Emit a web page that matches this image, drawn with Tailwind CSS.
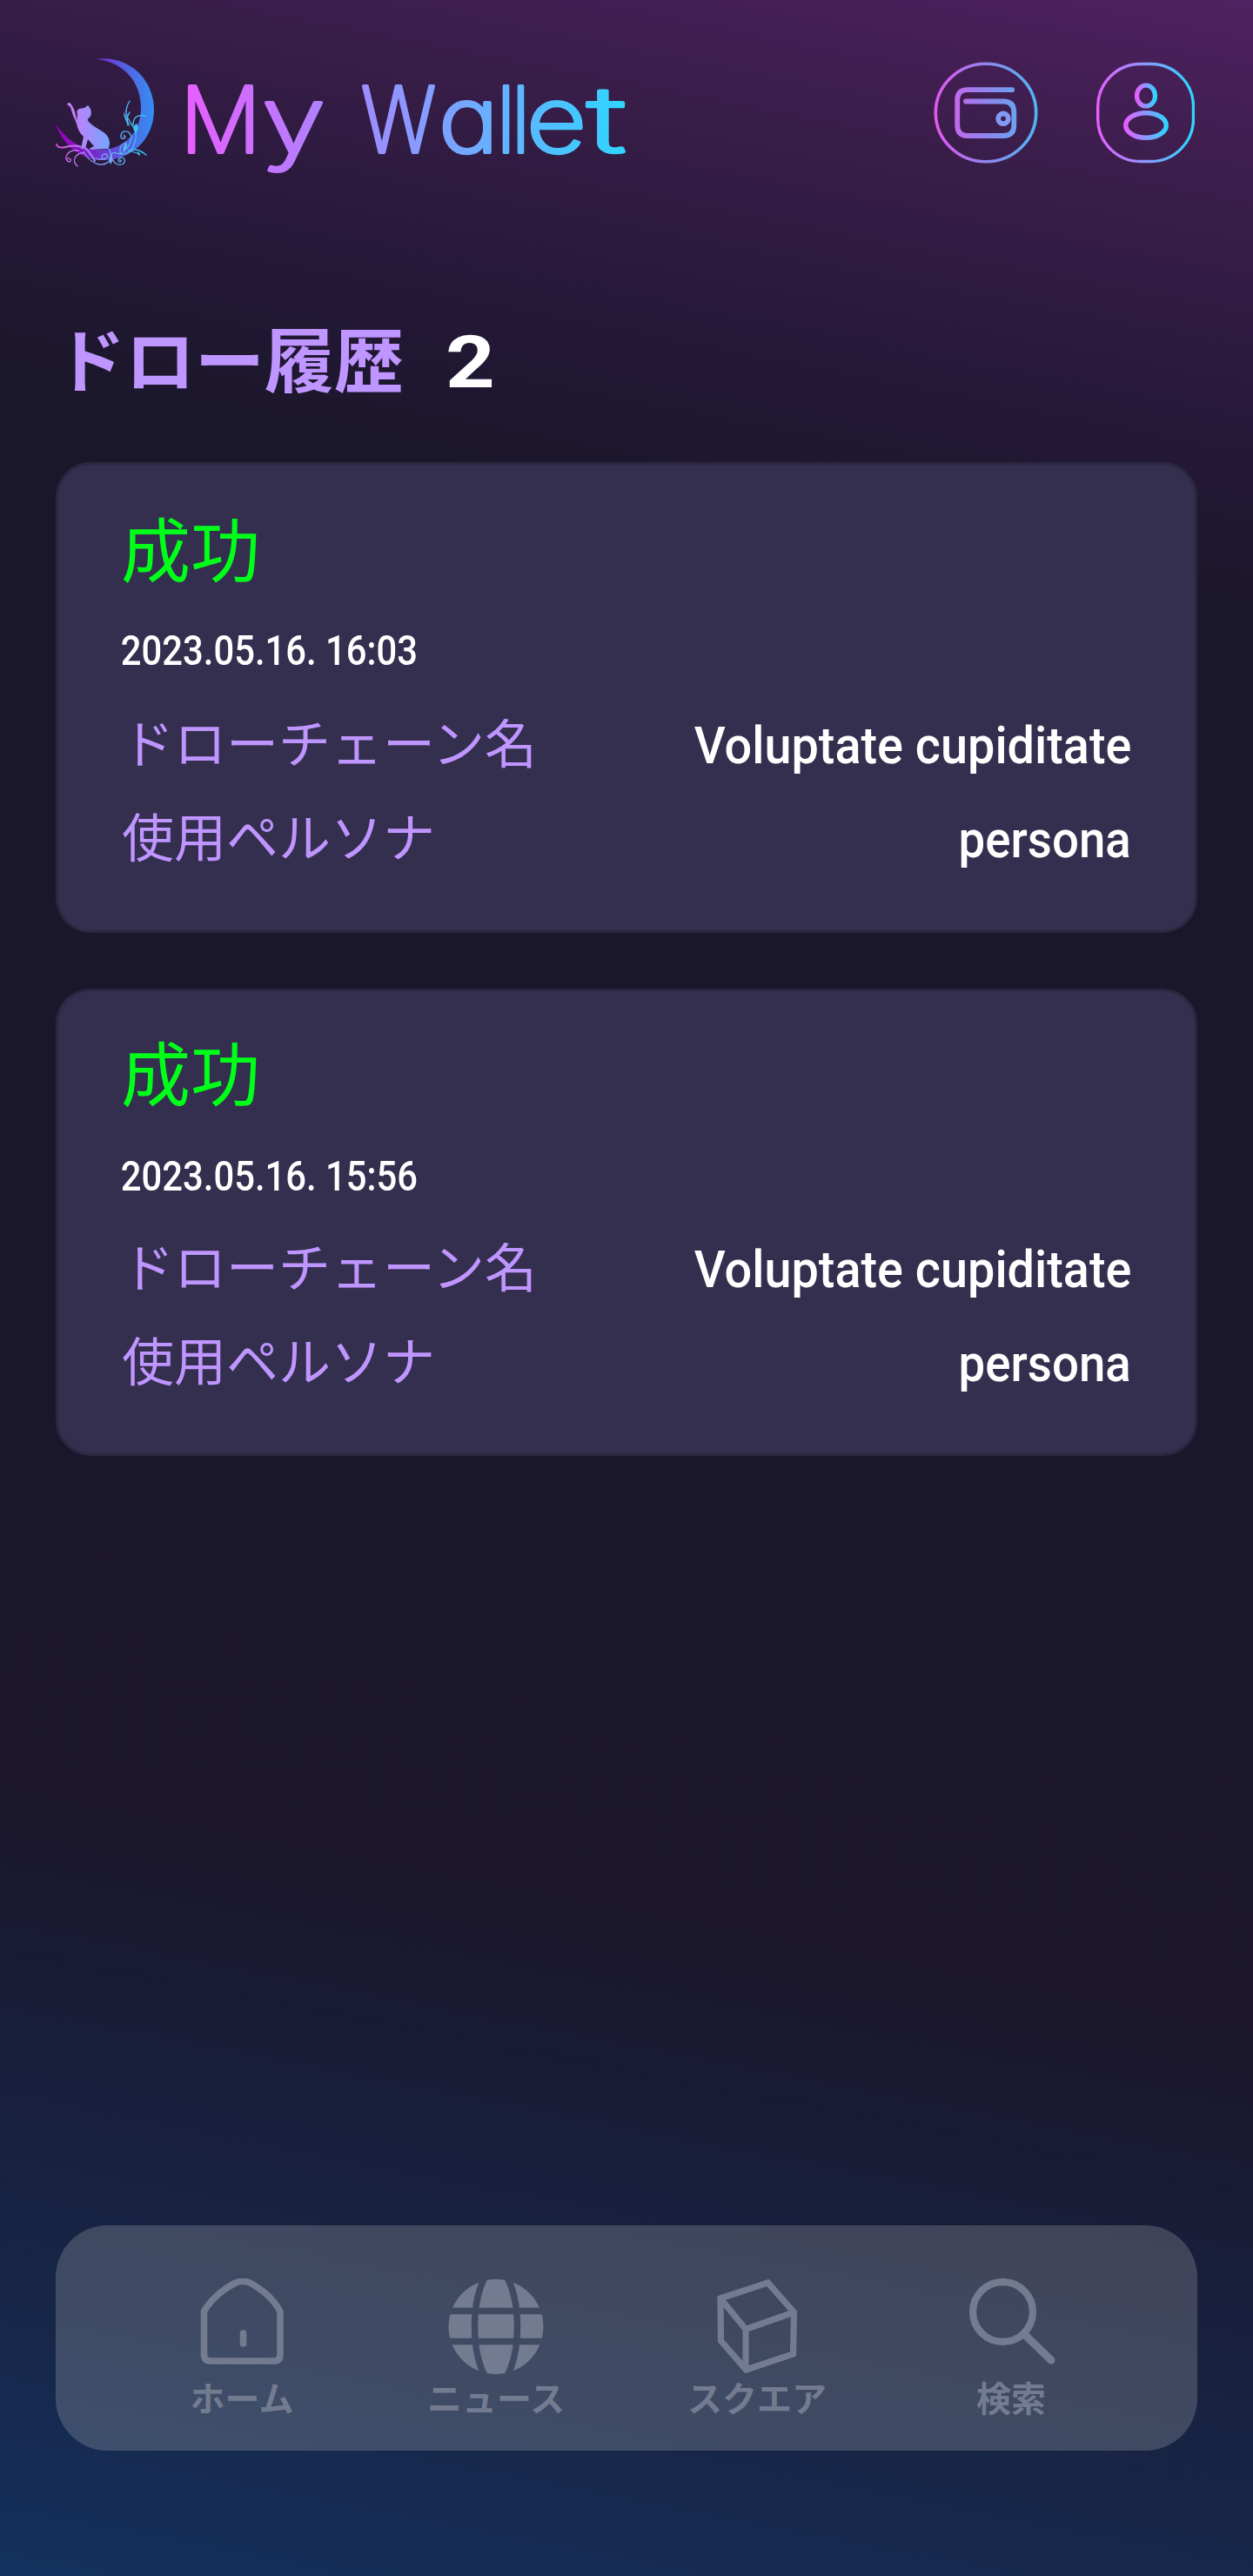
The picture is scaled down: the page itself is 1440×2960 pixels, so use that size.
<!DOCTYPE html>
<html lang="ja">
<head>
<meta charset="utf-8">
<title>My Wallet</title>
<script src="https://cdn.jsdelivr.net/npm/@tailwindcss/browser@4"></script>
</head>
<body class="w-[1440px] h-[2960px] overflow-hidden bg-[#1b162b] bg-[linear-gradient(191deg,#4f2160_0%,#381d48_8%,#241838_16%,#1b172b_22%,#1b162b_72%,#181f3c_82%,#172749_91%,#14315f_100%)] font-[Roboto,'Noto_Sans_CJK_JP',sans-serif] text-white flex flex-col">

<header class="h-[260px] pl-16 pr-[67px] flex justify-between shrink-0">
  <svg class="w-[680px] h-[210px]" viewBox="64 0 680 210" role="img" aria-label="My Wallet">
    <defs>
      <linearGradient id="brand" gradientUnits="userSpaceOnUse" x1="215" y1="0" x2="718" y2="0"><stop stop-color="#e65fff"/><stop offset=".5" stop-color="#8d97ff"/><stop offset="1" stop-color="#2fd5ff"/></linearGradient>
      <linearGradient id="moon" gradientUnits="userSpaceOnUse" x1="64" y1="0" x2="177" y2="0"><stop stop-color="#9d00b8"/><stop offset=".35" stop-color="#7a22c8"/><stop offset=".65" stop-color="#5b55dc"/><stop offset="1" stop-color="#3490f5"/></linearGradient>
      <linearGradient id="cat" gradientUnits="userSpaceOnUse" x1="76" y1="0" x2="126" y2="0"><stop stop-color="#d277f8"/><stop offset="1" stop-color="#76a4ff"/></linearGradient>
      <linearGradient id="vine" gradientUnits="userSpaceOnUse" x1="64" y1="0" x2="168" y2="0"><stop stop-color="#e64fe0"/><stop offset=".5" stop-color="#83a0f5"/><stop offset="1" stop-color="#2cc9f2"/></linearGradient>
    </defs>
    <path fill="url(#moon)" d="M110 68C145 62 177 89 177 126C177 160 151 184 119 184C93 184 72 167 64 142C75 159 91 171 111 172C141 174 162 153 162 124C162 96 144 71 110 68Z"/>
    <path fill="url(#cat)" d="M77 120Q79 116 82 120Q87 127 88 139L89 131Q87 127 91 125L97 124L101 121L104 125Q106 131 103 135Q99 137 102 140Q107 145 116 150Q125 155 126 163Q126 169 124 171L103 172L104 170L108 168L101 160L98 171L93 171L96 157Q90 152 88 142Q83 132 81 123Z"/>
    <g fill="none" stroke="url(#vine)" stroke-width="1.3" stroke-linecap="round">
      <path stroke-width="2" d="M65 166Q67 171 75 169Q88 165 99 171Q104 176 109 185"/>
      <path d="M90 173C76 171 72 185 80 186C84 184 79 180 77 183M97 175C84 177 83 186 89 191M96 175Q104 187 114 189Q125 190 128 180Q127 173 125 171M109 182C118 185 128 181 122 177C116 176 115 183 121 183M128 180C129 171 134 178 142 177Q152 175 154 166Q158 157 155 148Q151 143 147 136Q142 127 149 116M147 144Q144 136 149 129M153 146Q152 130 167 133M127 179Q133 193 142 188C147 181 136 178 136 185C138 188 141 184 138 184M138 177Q137 166 144 164M139 176Q149 171 151 158C150 148 137 149 139 158C143 162 146 156 142 156M148 173Q157 169 168 178M148 173Q158 176 160 177"/>
    </g>
    <g fill="url(#vine)"><path d="M142 128Q146 136 150 146Q142 138 142 128ZM157 142Q150 146 156 153Q161 148 157 142ZM145 163Q140 170 142 174Q148 170 145 163ZM128 178Q123 182 127 189Q131 184 128 178ZM158 174Q157 177 161 179Q161 175 158 174Z"/></g>
    <text font-family="Inter, sans-serif" font-weight="200" font-size="104" fill="url(#brand)" stroke="url(#brand)" stroke-width="4" stroke-linejoin="round" style="font-feature-settings:'cv11' 1" y="175"><tspan x="207" textLength="93" lengthAdjust="spacingAndGlyphs">M</tspan><tspan x="301" textLength="73" lengthAdjust="spacingAndGlyphs">y</tspan> <tspan x="415" textLength="86" lengthAdjust="spacingAndGlyphs">W</tspan><tspan x="504" textLength="69" lengthAdjust="spacingAndGlyphs">a</tspan><tspan x="573" font-weight="300" textLength="17" lengthAdjust="spacingAndGlyphs">l</tspan><tspan x="590" font-weight="300" textLength="17" lengthAdjust="spacingAndGlyphs">l</tspan><tspan x="605" textLength="69" lengthAdjust="spacingAndGlyphs">e</tspan><tspan x="675" textLength="44" lengthAdjust="spacingAndGlyphs">t</tspan></text>
  </svg>
  <div class="flex gap-[67px] pt-[71px]">
    <svg class="w-[120px] h-[118px]" viewBox="1073 71 120 118" fill="none">
      <defs><linearGradient id="wal" gradientUnits="userSpaceOnUse" x1="1073" y1="0" x2="1193" y2="0"><stop stop-color="#e556ee"/><stop offset=".5" stop-color="#9085ee"/><stop offset="1" stop-color="#4db7f2"/></linearGradient></defs>
      <g stroke="url(#wal)"><ellipse cx="1133" cy="129.5" rx="57.7" ry="56.2" stroke-width="3.6"/>
      <g stroke-width="5.8" stroke-linecap="round"><path d="M1163 103.2H1112Q1100.2 103.2 1100.2 115V144Q1100.2 156 1112 156H1153Q1165.3 156 1165.3 144V129Q1165.3 116.500 1153 116.500H1110"/><circle cx="1153" cy="136.300" r="5.800" stroke="#839af5"/></g></g>
    </svg>
    <svg class="w-[113px] h-[118px]" viewBox="1260 71 113 118" fill="none">
      <defs>
        <linearGradient id="usr" x1="0" x2="1"><stop stop-color="#e55fff"/><stop offset=".5" stop-color="#8d97ff"/><stop offset="1" stop-color="#2fd5ff"/></linearGradient>
      </defs>
      <g stroke="url(#usr)"><rect x="1261.700" y="73.500" width="109.800" height="112" rx="49" stroke-width="3.400"/><ellipse cx="1317" cy="110" rx="10.500" ry="12" stroke-width="5.200"/><ellipse cx="1317" cy="144" rx="23.300" ry="14.300" stroke-width="5.400"/></g>
    </svg>
  </div>
</header>

<main class="px-16 grow">
  <h1 class="h-[271px] pt-[97px] flex items-start text-[80px] leading-[120px] font-bold text-[#bf95ff]"><span>ドロー履歴</span><span class="ml-[48px] text-white text-[84px] inline-block origin-left scale-x-[1.18]">2</span></h1>

  <section class="h-[541px] rounded-[40px] border-[3px] border-[#2b2740] bg-[#342f4e] pl-[71px] pr-[73px] pt-[41px]">
    <p class="pl-px text-[80px] leading-[120px] text-[#00ff19]">成功</p>
    <p class="mt-[18px] pl-px text-[48px] leading-[70px] font-medium origin-left scale-x-[.87] w-fit whitespace-nowrap">2023.05.16. 16:03</p>
    <dl class="mt-5 text-[60px]">
      <div class="flex justify-between h-[108px] leading-[108px]"><dt class="pl-0.5 text-[#bf95ff]">ドローチェーン名</dt><dd class="font-medium origin-right scale-x-[.93]">Voluptate cupiditate</dd></div>
      <div class="flex justify-between h-[108px] leading-[108px]"><dt class="pl-0.5 text-[#bf95ff]">使用ペルソナ</dt><dd class="font-medium origin-right scale-x-[.91]">persona</dd></div>
    </dl>
  </section>

  <section class="mt-16 h-[537px] rounded-[40px] border-[3px] border-[#2b2740] bg-[#342f4e] pl-[71px] pr-[73px] pt-[38px]">
    <p class="pl-px text-[80px] leading-[120px] text-[#00ff19]">成功</p>
    <p class="mt-5 pl-px text-[48px] leading-[70px] font-medium origin-left scale-x-[.87] w-fit whitespace-nowrap">2023.05.16. 15:56</p>
    <dl class="mt-[18px] text-[60px]">
      <div class="flex justify-between h-[108px] leading-[108px]"><dt class="pl-0.5 text-[#bf95ff]">ドローチェーン名</dt><dd class="font-medium origin-right scale-x-[.93]">Voluptate cupiditate</dd></div>
      <div class="flex justify-between h-[108px] leading-[108px]"><dt class="pl-0.5 text-[#bf95ff]">使用ペルソナ</dt><dd class="font-medium origin-right scale-x-[.91]">persona</dd></div>
    </dl>
  </section>
</main>

<nav class="mx-16 mb-36 h-[259px] shrink-0 rounded-[60px] bg-[#dfe3da]/20 px-[72px] pt-[61px] grid grid-cols-[284px_300px_300px_284px] justify-items-center text-[40px] font-bold leading-[60px] text-[#737b90]">
  <a class="flex flex-col items-center">
    <svg class="w-[110px] h-[110px]" viewBox="223 2618 110 110" fill="none" stroke="currentColor" stroke-width="7.600" stroke-linejoin="round"><path d="M234.500 2656V2705Q234.500 2713 242 2713H315Q322 2713 322 2705V2656C315 2643 302 2631 287 2623Q279 2620 271 2623C255 2631 242 2643 234.500 2656Z"/><path stroke-linecap="round" d="M279.500 2681V2693"/></svg>
    <span>ホーム</span>
  </a>
  <a class="flex flex-col items-center">
    <svg class="w-[110px] h-[110px]" viewBox="0 0 110 110"><defs><mask id="grid"><rect width="110" height="110" fill="#fff"/><g fill="none" stroke="#000" stroke-width="7.500"><ellipse cx="55" cy="55.500" rx="24.500" ry="66"/><path d="M0 37.500H110M0 72.500H110"/></g></mask></defs><circle cx="55" cy="55.500" r="54.500" fill="currentColor" mask="url(#grid)"/></svg>
    <span>ニュース</span>
  </a>
  <a class="flex flex-col items-center">
    <svg class="w-[110px] h-[110px]" viewBox="815 2618 110 110" fill="none" stroke="currentColor" stroke-width="7.200"><path d="M828 2641L882.500 2623L912.500 2657L911.500 2705L857.500 2723L828.500 2690ZM828 2641L857 2676.500L912.500 2657M857 2676.500V2723"/></svg>
    <span>スクエア</span>
  </a>
  <a class="flex flex-col items-center">
    <svg class="w-[110px] h-[110px]" viewBox="1107 2618 110 110" fill="none" stroke="currentColor" stroke-width="8.300"><circle cx="1152.500" cy="2656.500" r="34.400"/><path stroke-linecap="round" stroke-width="9" d="M1178 2683L1208 2712"/></svg>
    <span>検索</span>
  </a>
</nav>
</body>
</html>
